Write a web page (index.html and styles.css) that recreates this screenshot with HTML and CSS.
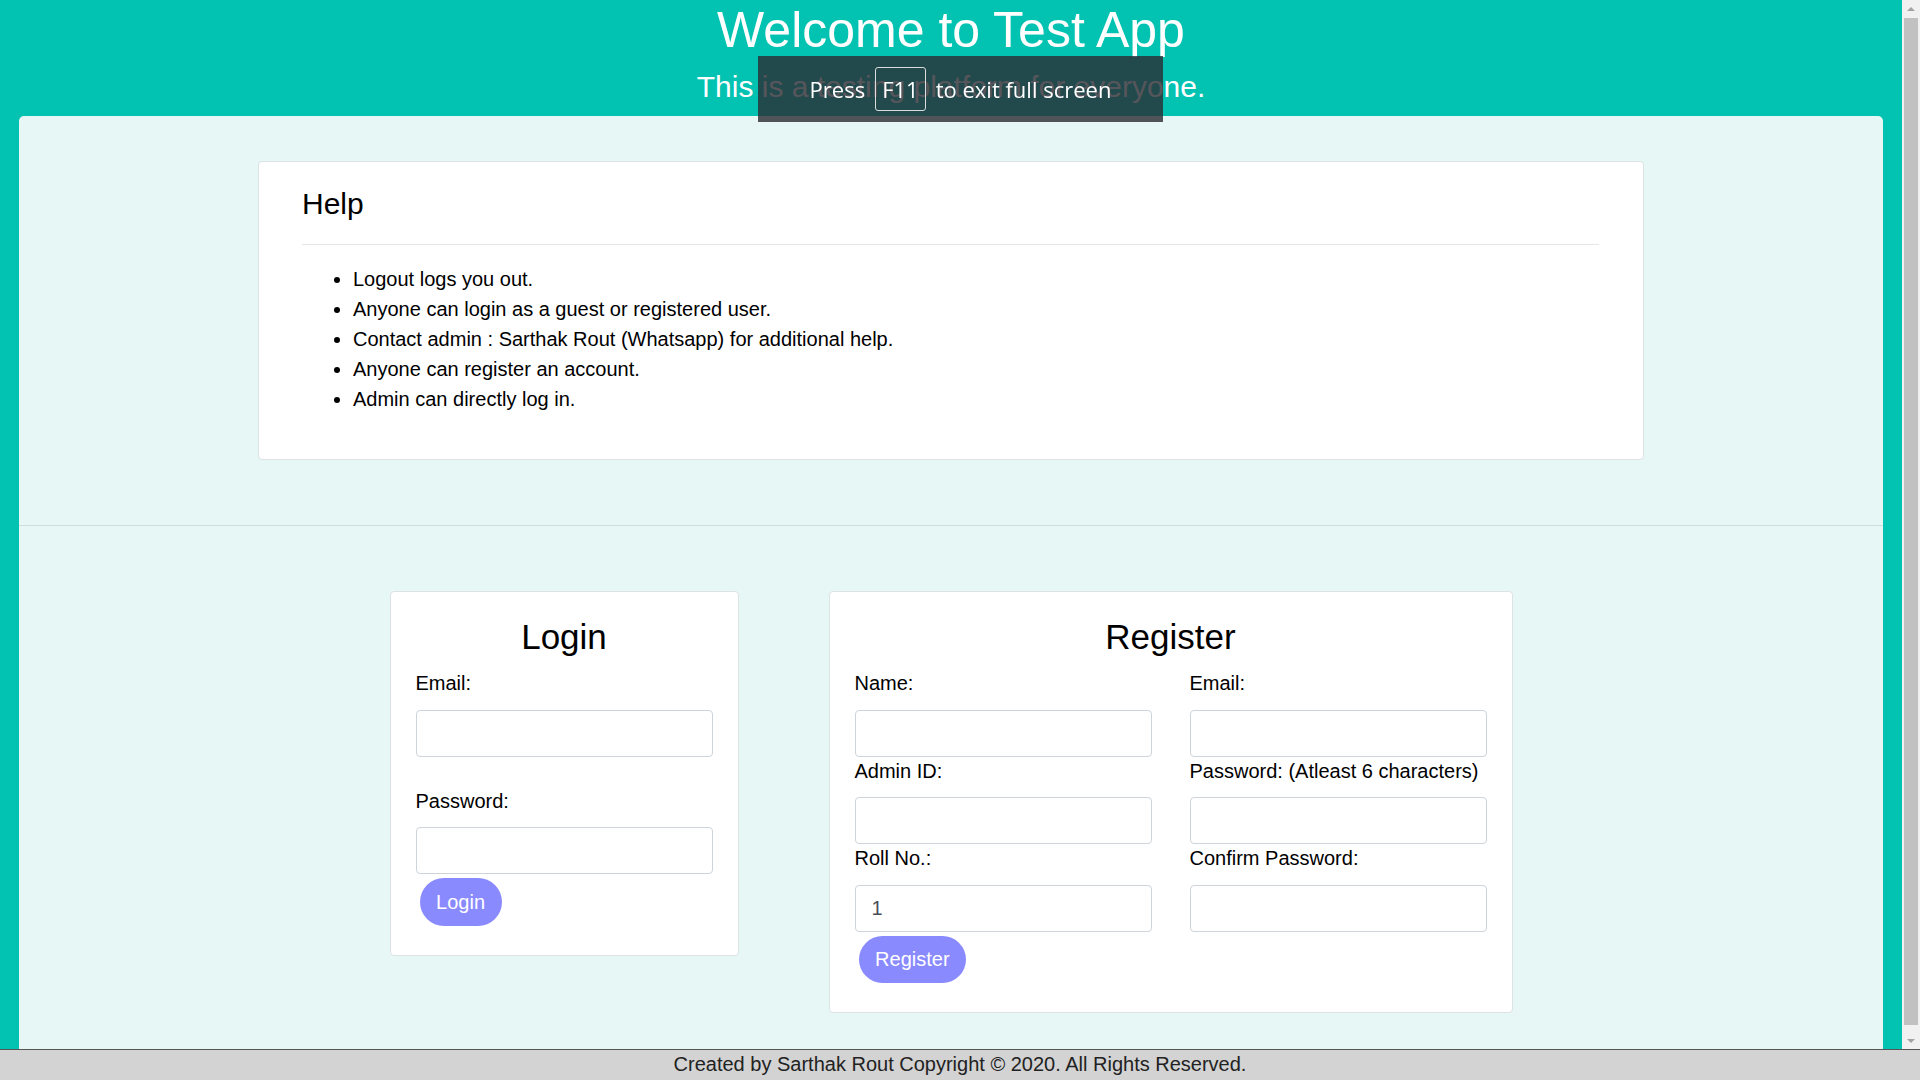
FILE: index.html
```html
<!DOCTYPE html>
<html lang="en">
<head>
<meta charset="utf-8">
<title>Test App</title>
<link rel="stylesheet" href="styles.css">
</head>
<body>
<div class="screen">
  <div class="viewport">
    <div class="page">
      <header class="masthead">
        <h1 class="app-title">Welcome to Test App</h1>
        <p class="tagline">This is a testing platform for everyone.</p>
      </header>
      <main class="panel">
        <section class="card help-card">
          <h3 class="help-title">Help</h3>
          <hr class="help-rule">
          <ul class="help-list">
            <li>Logout logs you out.</li>
            <li>Anyone can login as a guest or registered user.</li>
            <li>Contact admin : Sarthak Rout (Whatsapp) for additional help.</li>
            <li>Anyone can register an account.</li>
            <li>Admin can directly log in.</li>
          </ul>
        </section>
        <hr class="divider">
        <section class="forms">
          <form class="card login-card">
            <h2 class="form-title">Login</h2>
            <div class="field">
              <label class="field-label">Email:</label>
              <input class="field-input" type="text">
            </div>
            <div class="field field-spaced">
              <label class="field-label">Password:</label>
              <input class="field-input" type="password">
            </div>
            <button class="btn" type="button">Login</button>
          </form>
          <form class="card register-card">
            <h2 class="form-title">Register</h2>
            <div class="reg-grid">
              <div class="field">
                <label class="field-label">Name:</label>
                <input class="field-input" type="text">
              </div>
              <div class="field">
                <label class="field-label">Email:</label>
                <input class="field-input" type="text">
              </div>
              <div class="field">
                <label class="field-label">Admin ID:</label>
                <input class="field-input" type="text">
              </div>
              <div class="field">
                <label class="field-label">Password: (Atleast 6 characters)</label>
                <input class="field-input" type="password">
              </div>
              <div class="field">
                <label class="field-label">Roll No.:</label>
                <input class="field-input" type="text" value="1">
              </div>
              <div class="field">
                <label class="field-label">Confirm Password:</label>
                <input class="field-input" type="password">
              </div>
            </div>
            <button class="btn" type="button">Register</button>
          </form>
        </section>
      </main>
    </div>
    <div class="scrollbar">
      <div class="sb-btn"><span class="arrow-up"></span></div>
      <div class="sb-track"><div class="sb-thumb"></div></div>
      <div class="sb-btn"><span class="arrow-down"></span></div>
    </div>
  </div>
  <footer class="footer">Created by Sarthak Rout Copyright © 2020. All Rights Reserved.</footer>
</div>
<div class="fs-bubble"><span>Press</span><span class="fs-key">F11</span><span>to exit full screen</span></div>
</body>
</html>
```
FILE: styles.css
```css
* { box-sizing: border-box; }
html, body { margin: 0; padding: 0; }
body {
  font-family: "Liberation Sans", Arial, sans-serif;
  color: #000;
  overflow: hidden;
}
.screen {
  height: 100vh;
  display: flex;
  flex-direction: column;
}
.viewport {
  flex: 1;
  display: flex;
  min-height: 0;
  overflow: hidden;
}
.page {
  flex: 1;
  background: #02c2b1;
  overflow: hidden;
}
.masthead {
  height: 116px;
  padding-top: 2px;
  text-align: center;
  color: #fff;
}
.app-title {
  margin: 0;
  font-size: 50px;
  line-height: 56px;
  font-weight: normal;
}
.tagline {
  margin: 11px 0 0;
  font-size: 30px;
  line-height: 36px;
}
.panel {
  margin: 0 19px;
  background: #e6f7f5;
  border-radius: 5px 5px 0 0;
  padding-top: 45px;
  min-height: 1000px;
}
.card {
  background: #fff;
  border: 1px solid #dde2e5;
  border-radius: 4px;
}
.help-card {
  width: 1386px;
  margin: 0 auto;
  padding: 25px 44px 45px 43px;
}
.help-title {
  margin: 0;
  font-size: 30px;
  line-height: 34.5px;
  font-weight: normal;
}
.help-rule {
  margin: 22px 0 0;
  border: 0;
  border-top: 1px solid #e4e6e8;
  height: 0;
}
.help-list {
  margin: 19px 0 0;
  padding-left: 51px;
  font-size: 20px;
  line-height: 30px;
}
.divider {
  margin: 65px 0 0;
  border: 0;
  border-top: 1px solid #cddfdd;
  height: 0;
}
.forms {
  margin-top: 65px;
  display: flex;
  justify-content: center;
  align-items: flex-start;
  gap: 90px;
}
.login-card { width: 349px; padding: 24.5px 25px 25px; }
.register-card { width: 684px; padding: 24.5px 25px 25px; }
.form-title {
  margin: 0 0 11px;
  font-size: 35px;
  line-height: 42px;
  font-weight: normal;
  text-align: center;
}
.field-label {
  display: block;
  font-size: 20px;
  line-height: 29.5px;
  margin-bottom: 11px;
}
.field-spaced { margin-top: 30px; }
.field-input {
  display: block;
  width: 100%;
  height: 47px;
  border: 1px solid #ced4da;
  border-radius: 4px;
  padding: 0 16px;
  font-family: "Liberation Sans", Arial, sans-serif;
  font-size: 20px;
  color: #495057;
  background: #fff;
}
.reg-grid {
  display: grid;
  grid-template-columns: 1fr 1fr;
  column-gap: 38px;
}
.btn {
  display: inline-block;
  margin: 4px;
  padding: 9.6px 16.6px;
  border: 0;
  border-radius: 24px;
  background: #8a8aff;
  color: #fff;
  font-family: "Liberation Sans", Arial, sans-serif;
  font-size: 20px;
  line-height: 28.8px;
}
.scrollbar {
  width: 18px;
  background: #f1f1f1;
  display: flex;
  flex-direction: column;
}
.sb-btn {
  height: 17px;
  display: flex;
  align-items: center;
  justify-content: center;
}
.arrow-up, .arrow-down {
  width: 0;
  height: 0;
  border-left: 4px solid transparent;
  border-right: 4px solid transparent;
}
.arrow-up { border-bottom: 4px solid #a3a3a3; }
.arrow-down { border-top: 4px solid #a3a3a3; }
.sb-track {
  flex: 1;
  padding: 1px 2px 7px;
}
.sb-thumb {
  height: 100%;
  background: #c1c1c1;
}
.footer {
  height: 31px;
  border-top: 1px solid #555;
  background: #d3d3d3;
  color: #222;
  text-align: center;
  font-size: 20px;
  line-height: 28.8px;
}
.fs-bubble {
  position: fixed;
  left: 758px;
  top: 56px;
  width: 405px;
  height: 66px;
  background: rgba(42, 43, 50, 0.8);
  color: #fff;
  display: flex;
  align-items: center;
  justify-content: center;
  gap: 10px;
  font-family: "Open Sans", "Noto Sans", sans-serif;
  font-size: 22px;
}
.fs-key {
  height: 44px;
  display: flex;
  align-items: center;
  padding: 0 6px;
  border: 1px solid #dcdcdc;
  border-radius: 3px;
}
```
